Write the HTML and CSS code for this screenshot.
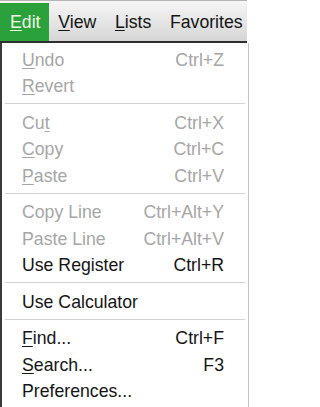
FILE: index.html
```html
<!DOCTYPE html>
<html>
<head>
<meta charset="utf-8">
<link rel="stylesheet" href="styles.css">
</head>
<body>
<div class="menubar">
  <div class="mb-item active"><u>E</u>dit</div>
  <div class="mb-item"><u>V</u>iew</div>
  <div class="mb-item"><u>L</u>ists</div>
  <div class="mb-item">Favorites</div>
</div>
<div class="dropdown">
  <div class="row disabled"><span class="label"><u>U</u>ndo</span><span class="key">Ctrl+Z</span></div>
  <div class="row disabled"><span class="label"><u>R</u>evert</span><span class="key"></span></div>
  <div class="sep"></div>
  <div class="row disabled"><span class="label">Cu<u>t</u></span><span class="key">Ctrl+X</span></div>
  <div class="row disabled"><span class="label"><u>C</u>opy</span><span class="key">Ctrl+C</span></div>
  <div class="row disabled"><span class="label"><u>P</u>aste</span><span class="key">Ctrl+V</span></div>
  <div class="sep"></div>
  <div class="row disabled"><span class="label">Copy Line</span><span class="key">Ctrl+Alt+Y</span></div>
  <div class="row disabled"><span class="label">Paste Line</span><span class="key">Ctrl+Alt+V</span></div>
  <div class="row"><span class="label">Use Register</span><span class="key">Ctrl+R</span></div>
  <div class="sep"></div>
  <div class="row"><span class="label">Use Calculator</span><span class="key"></span></div>
  <div class="sep"></div>
  <div class="row"><span class="label"><u>F</u>ind...</span><span class="key">Ctrl+F</span></div>
  <div class="row"><span class="label"><u>S</u>earch...</span><span class="key">F3</span></div>
  <div class="row"><span class="label">Preferences...</span><span class="key"></span></div>
</div>
</body>
</html>
```

FILE: styles.css
```css
html, body {
  margin: 0;
  padding: 0;
  background: #ffffff;
}
body {
  width: 251px;
  height: 407px;
  overflow: hidden;
  font-family: "Liberation Sans", Arial, sans-serif;
  font-size: 17.7px;
}
u {
  text-decoration-thickness: 1px;
  text-underline-offset: 2px;
}
.menubar {
  display: flex;
  height: 38px;
  padding-top: 2px;
  border-top: 1px solid #b4b4b4;
  border-bottom: 2px solid #2e2e2e;
  background: linear-gradient(#f6f6f6, #d6d6d6);
  margin-right: 4px;
}
.mb-item {
  height: 38px;
  line-height: 38px;
  padding: 0 9.3px;
  color: #141414;
  white-space: nowrap;
}
.mb-item:first-child {
  padding-left: 10px;
  padding-right: 8.5px;
}
.mb-item.active {
  background: #2aa13a;
  color: #eef8e6;
}
.dropdown {
  width: 249px;
  height: 364px;
  box-sizing: border-box;
  border-left: 2px solid #3a3a3a;
  border-right: 1px solid #c4c4c4;
  padding: 3.7px 0 0 0;
  background: #ffffff;
}
.row {
  display: flex;
  justify-content: space-between;
  height: 26.4px;
  line-height: 26.4px;
  padding: 0 24px 0 20px;
  color: #151515;
  white-space: nowrap;
}
.row.disabled {
  color: #a6a6a6;
}
.sep {
  height: 1px;
  background: #d2d2d2;
  margin: 4px 3px 5.3px 3px;
}
```
